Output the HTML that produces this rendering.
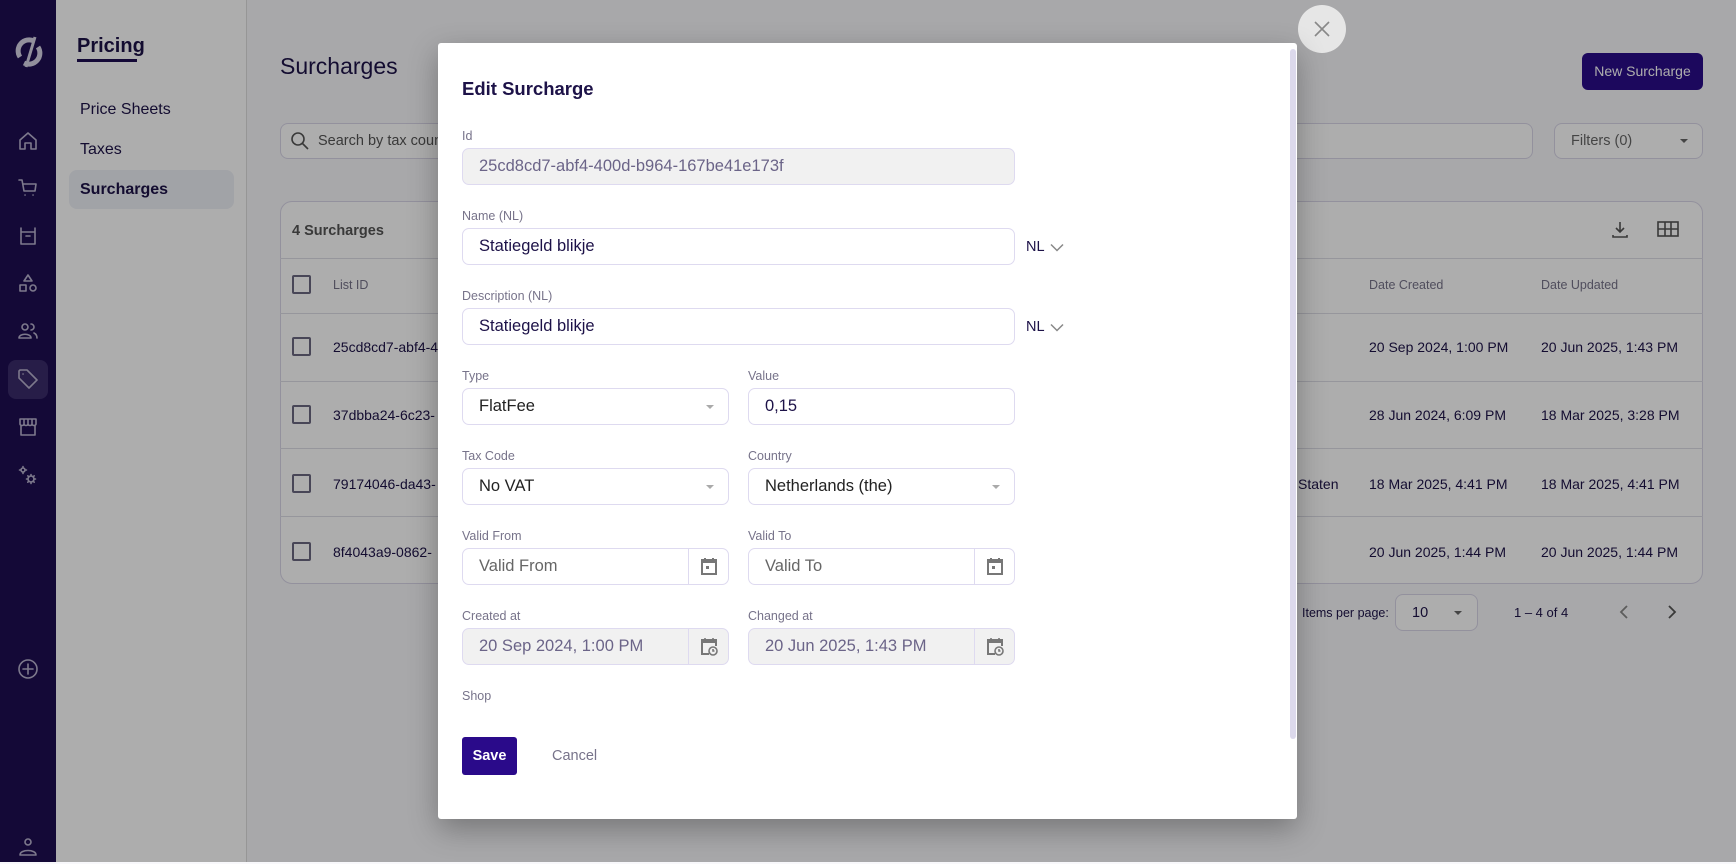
<!DOCTYPE html>
<html><head><meta charset="utf-8"><style>
*{box-sizing:border-box;margin:0;padding:0}
body{width:1736px;height:862px;overflow:hidden;position:relative;font-family:"Liberation Sans",sans-serif;background:#f8f8fb;color:#1d1248}
.a{position:absolute}
.nav{left:0;top:0;width:56px;height:862px;background:#1e0e52}
.side{left:56px;top:0;width:191px;height:862px;background:#fff;border-right:1px solid #ddd}
.ic{position:absolute;left:16px;width:24px;height:24px}
.ic svg{width:24px;height:24px;fill:none;stroke:#b9b3cf;stroke-width:1.6;stroke-linecap:round;stroke-linejoin:round}
.overlay{left:0;top:0;width:1736px;height:862px;background:rgba(0,0,0,0.32)}
.modal{left:438px;top:43px;width:859px;height:776px;background:#fff;border-radius:3px;box-shadow:0 10px 30px rgba(0,0,0,.3)}
.lbl{position:absolute;font-size:12.5px;color:#77738a}
.inp{position:absolute;height:37px;border:1px solid #dedaf0;border-radius:7px;background:#fff;font-size:16.5px;color:#1d1248;padding-left:16px;line-height:35px}
.dis{background:#f1f1f1;color:#6b6488}
.caret{position:absolute;right:14px;top:16px;width:0;height:0;border-left:4px solid transparent;border-right:4px solid transparent;border-top:4px solid #aaa}
.cal{position:absolute;right:0;top:0;width:40px;height:35px;border-left:1px solid #dedaf0}
.cal svg{position:absolute;left:11px;top:8px;width:18px;height:19px}
.th{font-size:12.5px;color:#77738a}
.td{font-size:14px;color:#1d1248}
.cb{position:absolute;left:292px;width:19px;height:19px;border:2px solid #6b6880;border-radius:2px}
.hl{position:absolute;left:280px;width:1423px;height:1px;background:#dedde6}
.nl{position:absolute;left:588px;font-size:14.5px;color:#1d1248}
.nl svg{position:absolute;left:24px;top:4px}
</style></head><body>
<div class="a nav">
 <svg class="a" style="left:14px;top:36px" width="30" height="32" viewBox="0 0 30 32"><path d="M20 5 A11 11 0 0 0 6 21 M10 27 A11 11 0 0 0 24 11" stroke="#d8d4e6" stroke-width="5" fill="none"/><path d="M21 1 L12 31" stroke="#d8d4e6" stroke-width="3"/></svg>
 <div class="ic" style="top:129px"><svg viewBox="0 0 24 24"><path d="M4 11 L12 4 L20 11 V20 H15 V14 H9 V20 H4 Z"/></svg></div>
 <div class="ic" style="top:176px"><svg viewBox="0 0 24 24"><path d="M3 4 H6 L8 15 H19 L20 8 H7 M9 19 h.1 M17 19 h.1"/></svg></div>
 <div class="ic" style="top:224px"><svg viewBox="0 0 24 24"><path d="M5 4 V20 H19 V4 M5 8 H19 M10 12 H14"/></svg></div>
 <div class="ic" style="top:272px"><svg viewBox="0 0 24 24"><path d="M12 3 L16 9 H8 Z"/><rect x="4" y="13" width="6" height="6"/><circle cx="17" cy="16" r="3"/></svg></div>
 <div class="ic" style="top:319px"><svg viewBox="0 0 24 24"><circle cx="9" cy="8" r="3"/><path d="M3 19 C3 14 15 14 15 19 Z M15 5 A3 3 0 0 1 15 11 M18 14 C20 15 21 17 21 19"/></svg></div>
 <div class="a" style="left:8px;top:360px;width:40px;height:39px;border-radius:8px;background:#3a2b6a"></div>
 <div class="ic" style="top:367px"><svg viewBox="0 0 24 24"><path d="M3 4 V11 L13 21 L21 13 L11 3 H4 Z M7 7 h.1"/></svg></div>
 <div class="ic" style="top:415px"><svg viewBox="0 0 24 24"><path d="M4 4 H20 V9 C20 11 16 11 16 9 C16 11 12 11 12 9 C12 11 8 11 8 9 C8 11 4 11 4 9 Z M5 11 V20 H19 V11 M8 4 V9 M12 4 V9 M16 4 V9"/></svg></div>
 <div class="ic" style="top:464px"><svg viewBox="0 0 24 24"><circle cx="7" cy="6" r="2"/><circle cx="15" cy="15" r="3"/><path d="M7 2.5V3.5M7 8.5V9.5M3.5 6H4.5M9.5 6H10.5M15 10.5V12M15 18V19.5M10.5 15H12M18 15H19.5M11.8 11.8L12.8 12.8M17.2 17.2L18.2 18.2M18.2 11.8L17.2 12.8M12.8 17.2L11.8 18.2"/></svg></div>
 <div class="ic" style="top:657px"><svg viewBox="0 0 24 24"><circle cx="12" cy="12" r="9"/><path d="M12 7 V17 M7 12 H17"/></svg></div>
 <div class="ic" style="top:835px"><svg viewBox="0 0 24 24"><circle cx="12" cy="7" r="3"/><path d="M4 20 C4 14 20 14 20 20 Z"/></svg></div>
</div>
<div class="a side">
 <div class="a" style="left:21px;top:35px;font-size:20px;font-weight:bold;color:#1d1248">Pricing</div>
 <div class="a" style="left:21px;top:59px;width:60px;height:3px;background:#1e0e52"></div>
 <div class="a" style="left:24px;top:101px;font-size:16px;color:#1d1248">Price Sheets</div>
 <div class="a" style="left:24px;top:141px;font-size:16px;color:#1d1248">Taxes</div>
 <div class="a" style="left:13px;top:170px;width:165px;height:39px;border-radius:8px;background:#eef0f6"></div>
 <div class="a" style="left:24px;top:181px;font-size:16px;font-weight:bold;color:#1d1248">Surcharges</div>
</div>
<div class="a" style="left:280px;top:53px;font-size:23px;color:#1d1248">Surcharges</div>
<div class="a" style="left:1582px;top:53px;width:121px;height:37px;border-radius:6px;background:#2a0d8a;color:#fff;font-size:14px;line-height:37px;text-align:center">New Surcharge</div>
<div class="a" style="left:280px;top:123px;width:1253px;height:36px;border:1px solid #d9d6e8;border-radius:8px;background:#fff"></div>
<svg class="a" style="left:290px;top:131px" width="20" height="20" viewBox="0 0 20 20"><circle cx="8" cy="8" r="6" stroke="#555" stroke-width="1.6" fill="none"/><path d="M12.5 12.5 L18 18" stroke="#555" stroke-width="1.6"/></svg>
<div class="a" style="left:318px;top:133px;font-size:14.5px;color:#555">Search by tax coun</div>
<div class="a" style="left:1554px;top:123px;width:149px;height:36px;border:1px solid #d9d6e8;border-radius:8px;background:#fff;font-size:14.5px;color:#666;padding:9px 16px">Filters (0)</div>
<div class="a" style="left:1680px;top:139px;border-left:4px solid transparent;border-right:4px solid transparent;border-top:4px solid #666"></div>
<div class="a" style="left:280px;top:201px;width:1423px;height:383px;border:1px solid #d9d6e8;border-radius:12px;background:#fff"></div>
<div class="a" style="left:292px;top:223px;font-size:14.5px;font-weight:bold;color:#555">4 Surcharges</div>
<div class="hl" style="top:258px"></div><div class="hl" style="top:313px"></div><div class="hl" style="top:381px"></div><div class="hl" style="top:448px"></div><div class="hl" style="top:516px"></div>
<div class="cb" style="top:275px"></div><div class="a th" style="left:333px;top:278px">List ID</div>
<div class="a th" style="left:1369px;top:278px">Date Created</div><div class="a th" style="left:1541px;top:278px">Date Updated</div>
<div class="cb" style="top:337px"></div><div class="a td" style="left:333px;top:339px">25cd8cd7-abf4-4</div><div class="a td" style="left:1369px;top:339px">20 Sep 2024, 1:00 PM</div><div class="a td" style="left:1541px;top:339px">20 Jun 2025, 1:43 PM</div>
<div class="cb" style="top:405px"></div><div class="a td" style="left:333px;top:407px">37dbba24-6c23-</div><div class="a td" style="left:1369px;top:407px">28 Jun 2024, 6:09 PM</div><div class="a td" style="left:1541px;top:407px">18 Mar 2025, 3:28 PM</div>
<div class="cb" style="top:474px"></div><div class="a td" style="left:333px;top:476px">79174046-da43-</div><div class="a td" style="left:1298px;top:476px">Staten</div><div class="a td" style="left:1369px;top:476px">18 Mar 2025, 4:41 PM</div><div class="a td" style="left:1541px;top:476px">18 Mar 2025, 4:41 PM</div>
<div class="cb" style="top:542px"></div><div class="a td" style="left:333px;top:544px">8f4043a9-0862-</div><div class="a td" style="left:1369px;top:544px">20 Jun 2025, 1:44 PM</div><div class="a td" style="left:1541px;top:544px">20 Jun 2025, 1:44 PM</div>
<svg class="a" style="left:1609px;top:219px" width="22" height="22" viewBox="0 0 22 22" fill="none" stroke="#555" stroke-width="1.6"><path d="M11 3 V13 M7 9 L11 13 L15 9 M4 16 V18 H18 V16"/></svg>
<svg class="a" style="left:1657px;top:220px" width="22" height="18" viewBox="0 0 22 18" fill="none" stroke="#555" stroke-width="1.6"><rect x="1" y="2" width="20" height="14"/><path d="M1 9 H21 M8 2 V16 M14 2 V16"/></svg>
<div class="a" style="left:1302px;top:606px;font-size:12.5px;color:#1d1248">Items per page:</div>
<div class="a" style="left:1395px;top:594px;width:83px;height:37px;border:1px solid #d9d6e8;border-radius:8px;background:#fff;font-size:14.5px;padding:10px 16px">10</div>
<div class="a" style="left:1454px;top:611px;border-left:4px solid transparent;border-right:4px solid transparent;border-top:4px solid #666"></div>
<div class="a" style="left:1514px;top:605px;font-size:13px">1 – 4 of 4</div>
<svg class="a" style="left:1619px;top:605px" width="10" height="14" viewBox="0 0 10 14" fill="none" stroke="#888" stroke-width="1.8"><path d="M8 1L2 7L8 13"/></svg>
<svg class="a" style="left:1667px;top:605px" width="10" height="14" viewBox="0 0 10 14" fill="none" stroke="#555" stroke-width="1.8"><path d="M2 1L8 7L2 13"/></svg>

<div class="a overlay"></div>
<div class="a" style="left:1298px;top:5px;width:48px;height:48px;border-radius:50%;background:#e6e6e6"></div>
<svg class="a" style="left:1314px;top:21px" width="16" height="16" viewBox="0 0 16 16" stroke="#888" stroke-width="1.6"><path d="M1 1 L15 15 M15 1 L1 15"/></svg>
<div class="a modal">
 <div class="a" style="right:1px;top:6px;width:6px;height:690px;background:#dcd9ec;border-radius:3px"></div>
 <div class="a" style="left:24px;top:35px;font-size:18.5px;font-weight:bold;color:#1d1248">Edit Surcharge</div>
 <div class="lbl" style="left:24px;top:86px">Id</div>
 <div class="inp dis" style="left:24px;top:105px;width:553px">25cd8cd7-abf4-400d-b964-167be41e173f</div>
 <div class="lbl" style="left:24px;top:166px">Name (NL)</div>
 <div class="inp" style="left:24px;top:185px;width:553px">Statiegeld blikje</div>
 <div class="nl" style="top:196px">NL<svg width="14" height="9" viewBox="0 0 14 9" fill="none" stroke="#888" stroke-width="1.5"><path d="M1 1.5L7 7.5L13 1.5"/></svg></div>
 <div class="lbl" style="left:24px;top:246px">Description (NL)</div>
 <div class="inp" style="left:24px;top:265px;width:553px">Statiegeld blikje</div>
 <div class="nl" style="top:276px">NL<svg width="14" height="9" viewBox="0 0 14 9" fill="none" stroke="#888" stroke-width="1.5"><path d="M1 1.5L7 7.5L13 1.5"/></svg></div>
 <div class="lbl" style="left:24px;top:326px">Type</div>
 <div class="inp" style="left:24px;top:345px;width:267px;color:#222">FlatFee<div class="caret"></div></div>
 <div class="lbl" style="left:310px;top:326px">Value</div>
 <div class="inp" style="left:310px;top:345px;width:267px">0,15</div>
 <div class="lbl" style="left:24px;top:406px">Tax Code</div>
 <div class="inp" style="left:24px;top:425px;width:267px;color:#222">No VAT<div class="caret"></div></div>
 <div class="lbl" style="left:310px;top:406px">Country</div>
 <div class="inp" style="left:310px;top:425px;width:267px;color:#222">Netherlands (the)<div class="caret"></div></div>
 <div class="lbl" style="left:24px;top:486px">Valid From</div>
 <div class="inp" style="left:24px;top:505px;width:267px;color:#666">Valid From<div class="cal"><svg viewBox="0 0 18 19"><rect x="2" y="3" width="14" height="14" fill="none" stroke="#777" stroke-width="2"/><rect x="2" y="3" width="14" height="3" fill="#777"/><rect x="6" y="9" width="3" height="3" fill="#777"/><path d="M5 1V4M13 1V4" stroke="#777" stroke-width="2"/></svg></div></div>
 <div class="lbl" style="left:310px;top:486px">Valid To</div>
 <div class="inp" style="left:310px;top:505px;width:267px;color:#666">Valid To<div class="cal"><svg viewBox="0 0 18 19"><rect x="2" y="3" width="14" height="14" fill="none" stroke="#777" stroke-width="2"/><rect x="2" y="3" width="14" height="3" fill="#777"/><rect x="6" y="9" width="3" height="3" fill="#777"/><path d="M5 1V4M13 1V4" stroke="#777" stroke-width="2"/></svg></div></div>
 <div class="lbl" style="left:24px;top:566px">Created at</div>
 <div class="inp dis" style="left:24px;top:585px;width:267px">20 Sep 2024, 1:00 PM<div class="cal"><svg viewBox="0 0 18 19"><path d="M9 17H2V3H16V9" fill="none" stroke="#777" stroke-width="2"/><rect x="2" y="3" width="14" height="3" fill="#777"/><circle cx="13" cy="14" r="4" fill="#f1f1f1" stroke="#777" stroke-width="1.6"/><path d="M13 12V14H14.5M5 1V4M13 1V4" stroke="#777" stroke-width="1.6" fill="none"/></svg></div></div>
 <div class="lbl" style="left:310px;top:566px">Changed at</div>
 <div class="inp dis" style="left:310px;top:585px;width:267px">20 Jun 2025, 1:43 PM<div class="cal"><svg viewBox="0 0 18 19"><path d="M9 17H2V3H16V9" fill="none" stroke="#777" stroke-width="2"/><rect x="2" y="3" width="14" height="3" fill="#777"/><circle cx="13" cy="14" r="4" fill="#f1f1f1" stroke="#777" stroke-width="1.6"/><path d="M13 12V14H14.5M5 1V4M13 1V4" stroke="#777" stroke-width="1.6" fill="none"/></svg></div></div>
 <div class="lbl" style="left:24px;top:646px">Shop</div>
 <div class="a" style="left:24px;top:694px;width:55px;height:38px;border-radius:3px;background:#2a0a8a;color:#fff;font-size:14.5px;font-weight:bold;line-height:38px;text-align:center">Save</div>
 <div class="a" style="left:114px;top:705px;font-size:14.5px;color:#77738a">Cancel</div>
</div>
</body></html>
